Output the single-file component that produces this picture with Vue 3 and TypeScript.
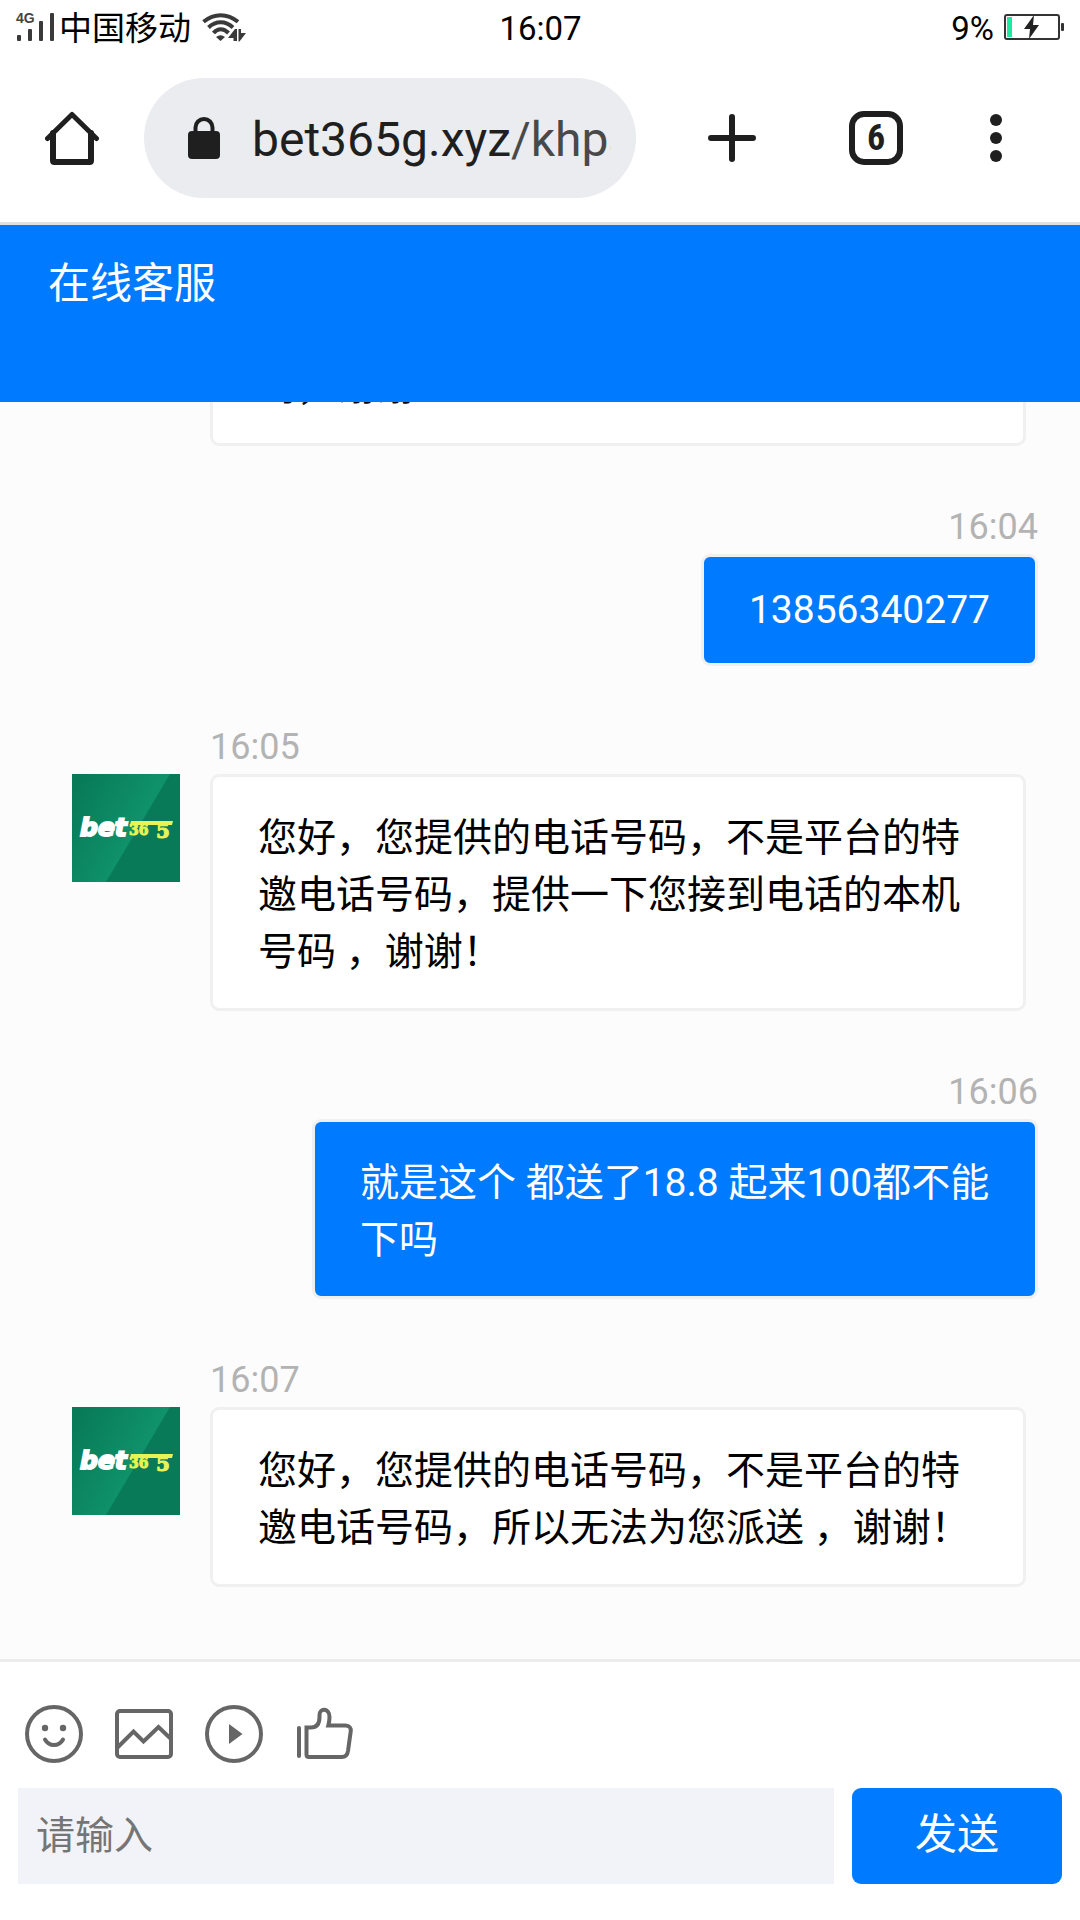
<script setup lang="ts">
import { ref } from 'vue'

interface Message {
  id: number
  from: 'agent' | 'visitor'
  time?: string
  text: string
}

const messages: Message[] = [
  { id: 1, from: 'agent', text: '吗，谢谢！' },
  { id: 2, from: 'visitor', time: '16:04', text: '13856340277' },
  { id: 3, from: 'agent', time: '16:05', text: '您好，您提供的电话号码，不是平台的特邀电话号码，提供一下您接到电话的本机号码 ，谢谢！' },
  { id: 4, from: 'visitor', time: '16:06', text: '就是这个 都送了18.8 起来100都不能下吗' },
  { id: 5, from: 'agent', time: '16:07', text: '您好，您提供的电话号码，不是平台的特邀电话号码，所以无法为您派送 ，谢谢！' },
]

const draft = ref('')

// Latin-only messages sit on shorter lines than Chinese ones
const isLatin = (text: string) => /^[\x20-\x7e]+$/.test(text)
</script>

<template>
  <div class="screen">
    <div class="status">
      <div class="status-left">
        <svg class="signal" width="40" height="28" viewBox="0 0 40 28">
          <text x="0" y="10" class="network">4G</text>
          <g fill="#3a3a3a">
            <rect x="1" y="22" width="4" height="6" rx="1" />
            <rect x="12" y="16" width="4" height="12" rx="1" />
            <rect x="23" y="8" width="4" height="20" rx="1" />
            <rect x="34" y="0" width="4" height="28" rx="1" />
          </g>
        </svg>
        <span class="label">中国移动</span>
        <svg class="wifi" width="44" height="29" viewBox="0 0 44 29">
          <g fill="none" stroke="#3a3a3a" stroke-width="4">
            <path d="M1.5 8.800Q9.500 2.200 18.700 2.200T36 8.800" />
            <path d="M6.500 14.500Q12 9.300 18.700 9.300T31 14.500" />
            <path d="M11.500 20Q14.700 16.200 18.700 16.200T26.500 20" />
          </g>
          <path d="M14 24Q18.500 20.500 23 24L18.500 28Z" fill="#3a3a3a" />
          <path d="M26 25L33 16H35V28H31.500V25Z M36.500 16H39V20H44L37.500 28.500H36.500Z" fill="#3a3a3a" />
        </svg>
      </div>
      <span class="label">16:07</span>
      <div class="status-right">
        <span class="label">9%</span>
        <svg width="61" height="26" viewBox="0 0 61 26">
          <rect x="1" y="1" width="54" height="24" rx="2" fill="none" stroke="#333" stroke-width="2" />
          <rect x="57" y="9" width="3" height="8" rx="1" fill="#333" />
          <rect x="3" y="3" width="5" height="20" fill="#1de9a0" />
          <path d="M30 1L20 15H26L25 25L35 11H29Z" fill="#222" />
        </svg>
      </div>
    </div>

    <div class="toolbar">
      <button class="tool" type="button" aria-label="主页">
        <svg width="54" height="54" viewBox="0 0 54 54" fill="none" stroke="#1f1f1f" stroke-linecap="round">
          <path d="M8 22V49.500Q8 51 9.500 51H44.500Q46 51 46 49.500V22" stroke-width="6" />
          <path d="M2.500 27.500L27 3.500L51.500 27.500" stroke-width="5" stroke-linejoin="round" />
        </svg>
      </button>
      <button class="address" type="button" aria-label="地址栏">
        <svg width="32" height="42" viewBox="0 0 32 42">
          <rect y="14" width="32" height="28" rx="4" fill="#1f1f1f" />
          <path d="M7.500 16V10.500A8.500 8.500 0 0 1 24.500 10.500V16" fill="none" stroke="#1f1f1f" stroke-width="4" />
        </svg>
        <span class="url">bet365g.xyz<span class="path">/khpa</span></span>
      </button>
      <button class="tool" type="button" aria-label="新标签页">
        <svg width="48" height="48" viewBox="0 0 48 48" stroke="#1f1f1f" stroke-width="6" stroke-linecap="round">
          <path d="M24 3V45M3 24H45" />
        </svg>
      </button>
      <button class="tool" type="button" aria-label="标签页">
        <span class="tab-count">6</span>
      </button>
      <button class="tool menu" type="button" aria-label="菜单">
        <svg width="12" height="48" viewBox="0 0 12 48" fill="#1f1f1f">
          <circle cx="6" cy="6" r="6" />
          <circle cx="6" cy="24" r="6" />
          <circle cx="6" cy="42" r="6" />
        </svg>
      </button>
    </div>

    <header class="title">
      <h1>在线客服</h1>
    </header>

    <main class="chat">
      <article v-for="m in messages" :key="m.id" class="message" :class="[m.from, { continued: !m.time }]">
        <time v-if="m.time">{{ m.time }}</time>
        <div class="row">
          <svg v-if="m.from === 'agent' && m.time" width="108" height="108" viewBox="0 0 108 108" role="img" aria-label="bet365">
            <defs>
              <linearGradient id="shine" gradientUnits="userSpaceOnUse" x1="0" y1="20" x2="66" y2="54">
                <stop offset="0" stop-color="#087a58" />
                <stop offset="1" stop-color="#0f926a" />
              </linearGradient>
            </defs>
            <rect width="108" height="108" fill="#087a58" />
            <path d="M0 0H98L34 108H0Z" fill="url(#shine)" />
            <text x="8" y="62" class="logo-bet">bet</text>
            <path d="M59 47H101L100 51H58Z" fill="#e6f455" />
            <text x="57" y="61" class="logo-36">36</text>
            <text x="84" y="64" class="logo-5">5</text>
          </svg>
          <p class="bubble" :class="{ latin: isLatin(m.text) }">{{ m.text }}</p>
        </div>
      </article>
    </main>

    <footer class="composer">
      <div class="actions">
        <button type="button" aria-label="表情">
          <svg width="72" height="72" viewBox="0 0 72 72" fill="none" stroke="#666" stroke-width="4">
            <circle cx="36" cy="36" r="27" />
            <g fill="#666" stroke="none"><circle cx="27" cy="30" r="3.200" /><circle cx="45" cy="30" r="3.200" /></g>
            <path d="M27 41.500Q30 47 36 47T45 41.500" stroke-linecap="round" />
          </svg>
        </button>
        <button type="button" aria-label="图片">
          <svg width="72" height="72" viewBox="0 0 72 72" fill="none" stroke="#666" stroke-width="4">
            <rect x="9" y="13" width="54" height="46" rx="3" />
            <path d="M9 50L25.500 33.500L35.500 43.500L50.500 29L63 41" />
          </svg>
        </button>
        <button type="button" aria-label="视频">
          <svg width="72" height="72" viewBox="0 0 72 72">
            <circle cx="36" cy="36" r="27" fill="none" stroke="#666" stroke-width="4" />
            <path d="M31 26L44.500 36L31 46Z" fill="#666" />
          </svg>
        </button>
        <button type="button" aria-label="评价">
          <svg width="72" height="72" viewBox="0 0 72 72" fill="none" stroke="#666" stroke-width="4" stroke-linecap="round">
            <path d="M11 30V58" />
            <path d="M18.500 29.500H23C29 29.500 31.500 26 31.500 19V17C31.500 9.500 41.500 10 41.500 19C41.500 22.500 41 25 40.300 27.500H57.500Q63.500 28 62.700 33.500L60 53Q59 59 54 59H21Q18.500 59 18.500 56.500Z" />
          </svg>
        </button>
      </div>
      <form class="entry" @submit.prevent>
        <input v-model="draft" type="text" placeholder="请输入" aria-label="请输入" />
        <button class="send" type="submit">发送</button>
      </form>
    </footer>
  </div>
</template>

<style>
body {
  margin: 0;
  background: #fff;
}
</style>

<style scoped>
.screen {
  display: flex;
  flex-direction: column;
  height: 100vh;
  overflow: hidden;
  background: #fff;
  color: #000;
  font-family: Roboto, "Noto Sans CJK SC", sans-serif;
}

button {
  padding: 0;
  border: 0;
  background: none;
  color: inherit;
  font-family: inherit;
}

svg {
  display: block;
  flex: none;
}

.status {
  display: grid;
  grid-template-columns: 1fr auto 1fr;
  align-items: center;
  height: 54px;
  padding: 0 15px 0 16px;
  font-size: 33px;
  line-height: 50px;
}

.label {
  padding-top: 3px;
}

.status-left,
.status-right {
  display: flex;
  align-items: center;
}

.status-left {
  gap: 3px;
}

.status-right {
  justify-content: flex-end;
  gap: 10px;
}

.signal {
  overflow: visible;
}

.wifi {
  margin-left: 8px;
}

.network {
  fill: #444;
  font: bold 14px "Liberation Sans", sans-serif;
}

.toolbar {
  display: flex;
  align-items: center;
  height: 168px;
  padding-right: 36px;
  border-bottom: 3px solid #dfe1df;
}

.tool {
  display: flex;
  flex: none;
  align-items: center;
  justify-content: center;
  width: 144px;
  height: 120px;
}

.tool.menu {
  width: 96px;
}

.address {
  display: flex;
  flex: 1;
  align-items: center;
  gap: 32px;
  min-width: 0;
  height: 120px;
  margin-right: 24px;
  padding: 0 25px 0 44px;
  border-radius: 60px;
  background: #ebecf0;
  color: #1f1f1f;
  text-align: left;
}

.url {
  flex: 1;
  overflow: hidden;
  padding-top: 4px;
  font-size: 48px;
  line-height: 60px;
  white-space: nowrap;
}

.path {
  color: #484a4a;
}

.tab-count {
  box-sizing: border-box;
  width: 54px;
  height: 54px;
  border: 6px solid #1f1f1f;
  border-radius: 15px;
  color: #1f1f1f;
  font-family: "Roboto Condensed", "Liberation Sans Narrow", Roboto, sans-serif;
  font-size: 36px;
  font-weight: 700;
  line-height: 42px;
  text-align: center;
}

.title {
  box-sizing: border-box;
  height: 177px;
  padding: 29px 48px 0;
  background: #007aff;
}

.title h1 {
  margin: 0;
  color: #fff;
  font-size: 42px;
  font-weight: 400;
  line-height: 60px;
}

.chat {
  display: flex;
  flex: 1;
  flex-direction: column;
  justify-content: flex-end;
  gap: 60px;
  min-height: 0;
  overflow: hidden;
  padding-bottom: 72px;
  background: #fcfcfc;
}

.message {
  display: flex;
  flex: none;
  flex-direction: column;
}

.agent {
  padding: 0 54px 0 72px;
}

.agent.continued {
  padding-left: 210px;
}

.visitor {
  align-items: flex-end;
  padding: 0 42px 0 312px;
}

time {
  margin-bottom: 6px;
  color: #b3b3b3;
  font-size: 36px;
  line-height: 42px;
}

.agent time {
  padding-left: 138px;
}

.row {
  display: flex;
  align-items: flex-start;
  gap: 30px;
}

.bubble {
  margin: 0;
  padding: 33px 45px 27px;
  border: 3px solid #f0f0f0;
  border-radius: 9px;
  font-size: 39px;
  line-height: 57px;
}

.bubble.latin {
  padding: 30px 45px;
  line-height: 46px;
}

.agent .bubble {
  flex: 1;
  background: #fff;
}

.visitor .bubble {
  background: #007aff;
  color: #fff;
}

.logo-bet {
  fill: #fff;
  stroke: #fff;
  stroke-width: 2px;
  font: italic bold 25px "DejaVu Sans", sans-serif;
}

.logo-36 {
  fill: #e6f455;
  stroke: #e6f455;
  stroke-width: 1px;
  font: bold 14px "DejaVu Serif", serif;
}

.logo-5 {
  fill: #e6f455;
  stroke: #e6f455;
  stroke-width: 1px;
  font: bold 20px "DejaVu Serif", serif;
}

.composer {
  padding: 36px 18px;
  border-top: 3px solid #ececec;
}

.actions {
  display: flex;
  gap: 18px;
  margin-bottom: 18px;
}

.entry {
  display: flex;
  gap: 18px;
}

.entry input {
  box-sizing: border-box;
  flex: 1;
  min-width: 0;
  height: 96px;
  padding: 0 18px;
  border: 0;
  border-radius: 0;
  outline: 0;
  background: #f2f3f8;
  color: #000;
  font-family: inherit;
  font-size: 39px;
}

.entry input::placeholder {
  color: #757575;
}

.send {
  width: 210px;
  height: 96px;
  padding-bottom: 2px;
  border-radius: 9px;
  background: #007aff;
  color: #fff;
  font-size: 42px;
  line-height: 60px;
}
</style>
